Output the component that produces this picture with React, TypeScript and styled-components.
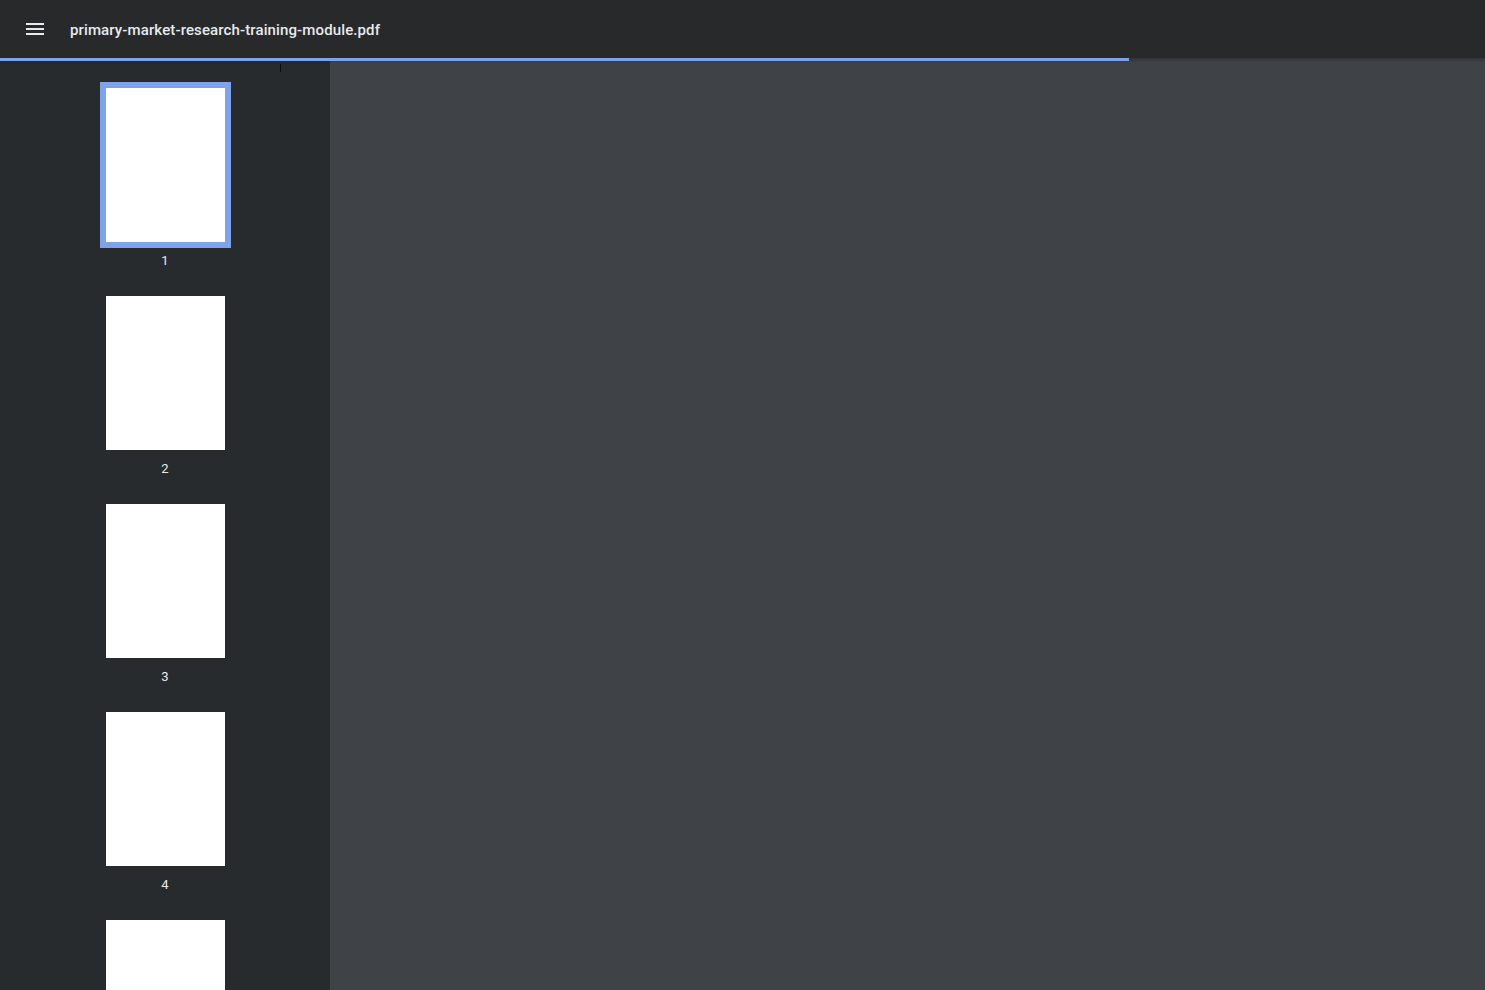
import React from "react";
import styled, { createGlobalStyle } from "styled-components";

const GlobalStyle = createGlobalStyle`
  html, body, #root {
    margin: 0;
    height: 100%;
  }
  body {
    background: #3f4246;
    font-family: Roboto, "Noto Sans", sans-serif;
    overflow: hidden;
  }
`;

const Viewer = styled.div`
  display: flex;
  flex-direction: column;
  height: 990px;
`;

const Toolbar = styled.header`
  position: relative;
  display: flex;
  align-items: center;
  height: 58px;
  padding: 0 0 0 22px;
  background: #27292b;
  color: #e8eaed;
  box-shadow: 0 2px 3px rgba(0, 0, 0, 0.25);
  z-index: 2;
  flex-shrink: 0;
`;

const MenuButton = styled.button`
  display: flex;
  align-items: center;
  justify-content: center;
  width: 26px;
  height: 26px;
  padding: 0;
  margin-right: 22px;
  border: none;
  background: transparent;
  color: #e8eaed;
  cursor: pointer;
`;

const Title = styled.span`
  font-size: 15px;
  font-weight: 500;
  letter-spacing: 0.12px;
  margin-top: 1px;
`;

const Progress = styled.div<{ $value: number }>`
  position: absolute;
  left: 0;
  bottom: -3px;
  height: 3px;
  width: ${({ $value }) => $value}%;
  background: #7fa3ea;
`;

const Body = styled.div`
  display: flex;
  flex: 1;
  min-height: 0;
`;

const Sidebar = styled.aside`
  position: relative;
  width: 330px;
  flex-shrink: 0;
  background: #282b2d;
  overflow: hidden;
  display: flex;
  flex-direction: column;
  align-items: center;
  padding-top: 24px;
  box-sizing: border-box;
`;

const Caret = styled.span`
  position: absolute;
  left: 280px;
  top: 6px;
  width: 1px;
  height: 8px;
  background: #0b0c0d;
`;

const Thumb = styled.div`
  display: flex;
  flex-direction: column;
  align-items: center;
  flex-shrink: 0;
  width: 131px;
  margin-bottom: 22px;
`;

const Page = styled.div<{ $active?: boolean }>`
  width: 119px;
  height: 154px;
  background: #fff;
  background-clip: content-box;
  box-sizing: content-box;
  border: 6px solid ${({ $active }) => ($active ? "#7fa3ea" : "transparent")};
`;

const PageNumber = styled.span`
  margin-top: 5px;
  font-size: 13px;
  line-height: 15px;
  color: #e8eaed;
`;

const Main = styled.main`
  flex: 1;
  background: #3f4246;
`;

const pages = [1, 2, 3, 4, 5];

export default function App() {
  return (
    <>
      <GlobalStyle />
      <Viewer>
        <Toolbar>
          <MenuButton aria-label="Menu">
            <svg width="20" height="20" viewBox="0 0 20 20">
              <rect x="1" y="4" width="18" height="2" fill="currentColor" />
              <rect x="1" y="9" width="18" height="2" fill="currentColor" />
              <rect x="1" y="14" width="18" height="2" fill="currentColor" />
            </svg>
          </MenuButton>
          <Title>primary-market-research-training-module.pdf</Title>
          <Progress $value={76} />
        </Toolbar>
        <Body>
          <Sidebar>
            <Caret />
            {pages.map((n) => (
              <Thumb key={n}>
                <Page $active={n === 1} />
                <PageNumber>{n}</PageNumber>
              </Thumb>
            ))}
          </Sidebar>
          <Main />
        </Body>
      </Viewer>
    </>
  );
}
